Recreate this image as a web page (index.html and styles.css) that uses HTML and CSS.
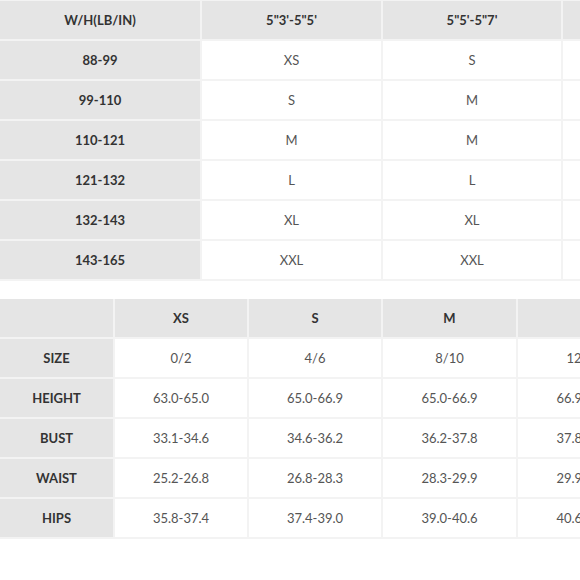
FILE: index.html
```html
<!DOCTYPE html>
<html>
<head>
<meta charset="utf-8">
<link rel="stylesheet" href="styles.css">
</head>
<body>
<div class="page">
  <div class="chart chart-a">
    <div class="cell head key">W/H(LB/IN)</div>
    <div class="cell head">5"3'-5"5'</div>
    <div class="cell head">5"5'-5"7'</div>
    <div class="cell head">5"7'-5"9'</div>

    <div class="cell key">88-99</div><div class="cell">XS</div><div class="cell">S</div><div class="cell">M</div>
    <div class="cell key">99-110</div><div class="cell">S</div><div class="cell">M</div><div class="cell">M</div>
    <div class="cell key">110-121</div><div class="cell">M</div><div class="cell">M</div><div class="cell">L</div>
    <div class="cell key">121-132</div><div class="cell">L</div><div class="cell">L</div><div class="cell">XL</div>
    <div class="cell key">132-143</div><div class="cell">XL</div><div class="cell">XL</div><div class="cell">XXL</div>
    <div class="cell key">143-165</div><div class="cell">XXL</div><div class="cell">XXL</div><div class="cell">XXL</div>
  </div>

  <div class="chart chart-b">
    <div class="cell head key"></div>
    <div class="cell head">XS</div>
    <div class="cell head">S</div>
    <div class="cell head">M</div>
    <div class="cell head">L</div>

    <div class="cell key">SIZE</div><div class="cell">0/2</div><div class="cell">4/6</div><div class="cell">8/10</div><div class="cell">12/14</div>
    <div class="cell key">HEIGHT</div><div class="cell">63.0-65.0</div><div class="cell">65.0-66.9</div><div class="cell">65.0-66.9</div><div class="cell">66.9-68.9</div>
    <div class="cell key">BUST</div><div class="cell">33.1-34.6</div><div class="cell">34.6-36.2</div><div class="cell">36.2-37.8</div><div class="cell">37.8-39.4</div>
    <div class="cell key">WAIST</div><div class="cell">25.2-26.8</div><div class="cell">26.8-28.3</div><div class="cell">28.3-29.9</div><div class="cell">29.9-31.5</div>
    <div class="cell key">HIPS</div><div class="cell">35.8-37.4</div><div class="cell">37.4-39.0</div><div class="cell">39.0-40.6</div><div class="cell">40.6-42.1</div>
  </div>
</div>
</body>
</html>
```

FILE: styles.css
```css
html, body {
  margin: 0;
  padding: 0;
  background: #ffffff;
}
body {
  width: 580px;
  height: 580px;
  overflow: hidden;
  font-family: Lato, "Open Sans", sans-serif;
}
.page {
  display: flex;
  flex-direction: column;
  gap: 18px;
}
.chart {
  display: grid;
  gap: 2px;
  background: #f3f3f3;
  width: max-content;
  padding-bottom: 2px;
}
.chart-a {
  grid-template-columns: 200px 179px 178px 179px;
  grid-auto-rows: 38px;
  padding-top: 1px;
}
.chart-b {
  grid-template-columns: 113px 132px 132px 133px 133px;
  grid-auto-rows: 38px;
}
.cell {
  background: #ffffff;
  display: flex;
  align-items: center;
  justify-content: center;
  font-size: 13px;
  color: #555555;
  white-space: nowrap;
}
.head, .key {
  background: #e5e5e5;
  font-weight: 700;
  color: #333333;
}
```
